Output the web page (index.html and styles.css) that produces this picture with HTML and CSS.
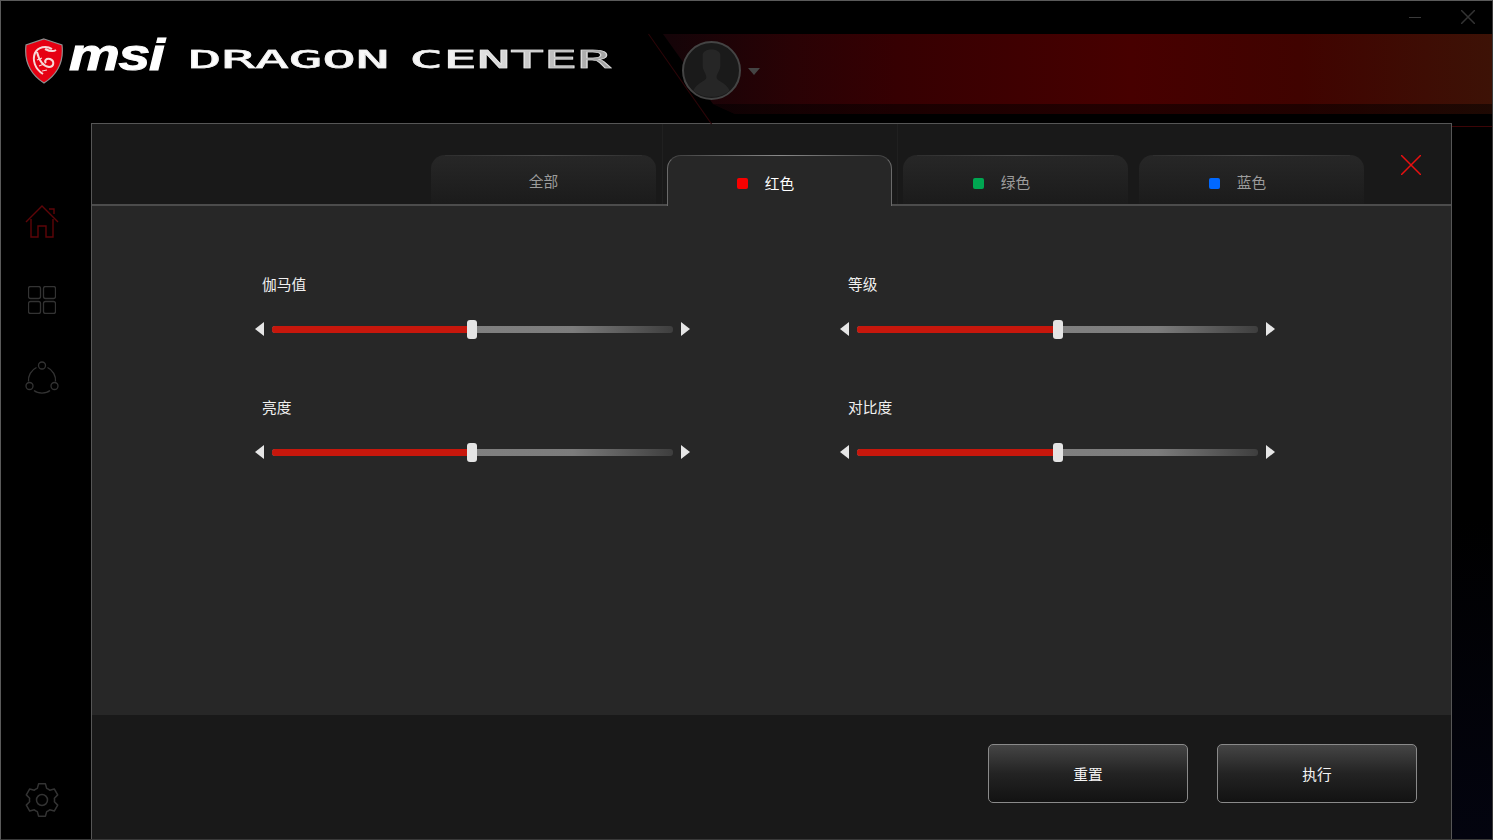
FILE: index.html
```html
<!DOCTYPE html>
<html lang="zh-CN">
<head>
    <meta charset="UTF-8">
    <meta name="viewport" content="width=device-width, initial-scale=1.0">
    <title>MSI Dragon Center</title>
    <link rel="stylesheet" href="styles.css">
</head>
<body>
    <div class="window">
        <header class="topbar">
            <svg class="shield" viewBox="0 0 40 46">
                <path d="M20 1 L38 7 C39.500 20 37 34 20 45 C3 34 .5 20 2 7 Z" fill="#e60012" stroke="#8f8f8f" stroke-width="1.200"/>
                <path d="M28 11 C22 7 14 9 11 15 C8 22 11 31 19 36 M13 14 C15 22 18 28 25 29 C30 29 31 23 26 21 C22 20 20 23 22 25 M21 11 C25 13 29 14 32 12" fill="none" stroke="#f7d8d8" stroke-width="2"/>
                <path d="M13 22 L18 20 M15 28 L20 26 M18 33 L23 32" fill="none" stroke="#f7d8d8" stroke-width="1.200"/>
            </svg>
            <div class="brand"><span class="brand-text">msi</span></div>
            <div class="product"><span class="product-text">DRAGON CENTER</span></div>
            <div class="banner">
                <div class="avatar">
                    <svg viewBox="0 0 59 59">
                        <path d="M20 13 C20 5 39 5 39 13 L39 24 C39 30 35 33 35 37 C35 41 45 42 49 51 C40 60 19 60 10 51 C14 42 24 41 24 37 C24 33 20 30 20 24 Z" fill="#262626"/>
                    </svg>
                </div>
                <span class="caret"></span>
            </div>
            <div class="win-controls">
                <span class="win-min"></span>
                <svg class="win-close" viewBox="0 0 14 14"><path d="M0 0 L14 14 M14 0 L0 14" stroke="#333" stroke-width="1.500"/></svg>
            </div>
        </header>

        <div class="main">
            <nav class="sidebar">
                <div class="nav-top">
                    <div class="nav-item">
                        <svg class="icon-home" viewBox="0 0 34 34">
                            <path d="M1 17 L17 1 L33 17 M24 4 H29 V9 M6 14 V32 H13 V21 H21 V32 H28 V14" fill="none" stroke="#5e0508" stroke-width="1.400"/>
                        </svg>
                    </div>
                    <div class="nav-item">
                        <svg class="icon-grid" viewBox="0 0 28 28">
                            <rect x=".5" y=".5" width="12" height="12" rx="2"/>
                            <rect x="15.500" y=".5" width="12" height="12" rx="2"/>
                            <rect x=".5" y="15.500" width="12" height="12" rx="2"/>
                            <rect x="15.500" y="15.500" width="12" height="12" rx="2"/>
                        </svg>
                    </div>
                    <div class="nav-item">
                        <svg class="icon-share" viewBox="0 0 34 34">
                            <circle cx="17" cy="4.500" r="3.500"/>
                            <circle cx="4.500" cy="25" r="3.500"/>
                            <circle cx="29.500" cy="25" r="3.500"/>
                            <path d="M11.500 6.500 C6 9 3 15 3.500 20.500 M22.500 6.500 C28 9 31 15 30.500 20.500 M9 29.500 C13 33 21 33 25 29.500"/>
                        </svg>
                    </div>
                </div>
                <div class="nav-item nav-gear">
                    <svg class="icon-gear" viewBox="0 0 34 34">
                        <circle cx="17" cy="17" r="5.500"/>
                        <path d="M13.570 .86 L20.430 .86 L21.680 5.410 Q23.300 6 24.700 7.150 L29.260 5.960 L32.690 11.900 L29.380 15.260 Q29.700 17 29.380 18.740 L32.690 22.100 L29.260 28.040 L24.700 26.850 Q23.300 28 21.680 28.590 L20.430 33.140 L13.570 33.140 L12.320 28.590 Q10.700 28 9.300 26.850 L4.740 28.040 L1.310 22.100 L4.620 18.740 Q4.300 17 4.620 15.260 L1.310 11.900 L4.740 5.960 L9.300 7.150 Q10.700 6 12.320 5.410 Z"/>
                    </svg>
                </div>
            </nav>

            <section class="panel">
                <div class="tabs">
                    <div class="tab plain">全部</div>
                    <div class="tab active"><span class="swatch red"></span>红色</div>
                    <div class="tab"><span class="swatch green"></span>绿色</div>
                    <div class="tab"><span class="swatch blue"></span>蓝色</div>
                    <svg class="panel-close" viewBox="0 0 20 20"><path d="M0 0 L20 20 M20 0 L0 20" stroke="#e81010" stroke-width="1.500"/></svg>
                </div>

                <div class="content">
                    <div class="setting">
                        <label>伽马值</label>
                        <div class="slider">
                            <span class="arrow left"></span>
                            <div class="track"><div class="fill"></div><span class="thumb"></span></div>
                            <span class="arrow right"></span>
                        </div>
                    </div>
                    <div class="setting">
                        <label>等级</label>
                        <div class="slider">
                            <span class="arrow left"></span>
                            <div class="track"><div class="fill"></div><span class="thumb"></span></div>
                            <span class="arrow right"></span>
                        </div>
                    </div>
                    <div class="setting">
                        <label>亮度</label>
                        <div class="slider">
                            <span class="arrow left"></span>
                            <div class="track"><div class="fill"></div><span class="thumb"></span></div>
                            <span class="arrow right"></span>
                        </div>
                    </div>
                    <div class="setting">
                        <label>对比度</label>
                        <div class="slider">
                            <span class="arrow left"></span>
                            <div class="track"><div class="fill"></div><span class="thumb"></span></div>
                            <span class="arrow right"></span>
                        </div>
                    </div>
                </div>

                <div class="actions">
                    <button class="btn">重置</button>
                    <button class="btn">执行</button>
                </div>
            </section>

            <div class="strip"></div>
        </div>
    </div>
</body>
</html>
```

FILE: styles.css
```css
* {
    box-sizing: border-box;
}
body {
    margin: 0;
    background: #000;
    font-family: "Noto Sans CJK SC", "Noto Sans", sans-serif;
    overflow: hidden;
}
.window {
    width: 1493px;
    height: 840px;
    display: flex;
    flex-direction: column;
    background: #000;
    border-top: 1px solid #5a5a5a;
    border-left: 1px solid #5a5a5a;
    border-right: 1px solid #3a3a3a;
    border-bottom: 1px solid #3a3a3a;
    overflow: hidden;
}

/* Top bar */
.topbar {
    height: 122px;
    flex: none;
    display: flex;
    align-items: flex-start;
    position: relative;
}
.shield {
    width: 40px;
    height: 46px;
    margin: 37px 0 0 23px;
    flex: none;
}
.brand {
    width: 100px;
    margin: 26px 0 0 5px;
    flex: none;
}
.brand-text {
    display: inline-block;
    font: italic 700 45px/56px "Liberation Sans", sans-serif;
    letter-spacing: -1px;
    color: #fff;
    -webkit-text-stroke: 1px #fff;
    transform: scaleX(1.27);
    transform-origin: left center;
}
.product {
    width: 424px;
    margin: 45px 0 0 19px;
    flex: none;
}
.product-text {
    display: inline-block;
    font: 400 25px/28px "DejaVu Sans Mono", monospace;
    word-spacing: -6px;
    white-space: nowrap;
    transform: scaleX(2.23);
    transform-origin: left center;
    background: linear-gradient(90deg, #fff 0%, #f4f4f4 60%, #a0a0a0 100%);
    -webkit-background-clip: text;
    background-clip: text;
    color: transparent;
    -webkit-text-stroke: .6px rgba(235, 235, 235, .75);
}
.banner {
    flex: 1;
    height: 80px;
    margin: 33px 0 0 41px;
    padding: 7px 0 0 29px;
    display: flex;
    align-items: flex-start;
    position: relative;
}
.banner::before {
    content: "";
    position: absolute;
    inset: 0;
    background:
        linear-gradient(180deg, transparent 0, transparent 70px, rgba(0, 0, 0, .5) 70px),
        linear-gradient(90deg, #150408 2%, #2a0205 17%, #360002 29%, #470000 57%, #400300 77%, #3d1206 100%);
    clip-path: polygon(10px 0, 100% 0, 100% 100%, 82px 100%, 60px 70px);
}
.banner::after {
    content: "";
    position: absolute;
    top: 0;
    left: -5px;
    width: 1px;
    height: 110px;
    background: #2c0508;
    transform: rotate(-35deg);
    transform-origin: top;
}
.avatar {
    width: 59px;
    height: 59px;
    flex: none;
    border: 2px solid #444;
    border-radius: 50%;
    background: #1a1a1a;
    overflow: hidden;
    position: relative;
    z-index: 1;
}
.avatar svg {
    display: block;
    width: 55px;
    height: 55px;
}
.caret {
    width: 0;
    height: 0;
    margin: 27px 0 0 7px;
    border-left: 6px solid transparent;
    border-right: 6px solid transparent;
    border-top: 7px solid #444;
    position: relative;
    z-index: 1;
}
.win-controls {
    position: absolute;
    top: 9px;
    right: 17px;
    display: flex;
    align-items: center;
    gap: 40px;
}
.win-min {
    width: 12px;
    height: 1px;
    background: #3a3a3a;
}
.win-close {
    width: 14px;
    height: 14px;
}

/* Layout below the top bar */
.main {
    flex: 1;
    min-height: 0;
    display: flex;
}
.sidebar {
    width: 90px;
    flex: none;
    display: flex;
    flex-direction: column;
    justify-content: space-between;
    padding: 60px 9px 0 0;
}
.nav-item {
    height: 78px;
    display: flex;
    justify-content: center;
    align-items: center;
}
.icon-home,
.icon-share,
.icon-gear {
    width: 34px;
    height: 34px;
}
.icon-grid {
    width: 28px;
    height: 28px;
}
.icon-grid rect,
.icon-share circle,
.icon-share path,
.icon-gear circle,
.icon-gear path {
    fill: none;
    stroke: #333;
    stroke-width: 1.300;
}
.icon-gear circle,
.icon-gear path {
    stroke-width: 1.500;
    stroke-linejoin: round;
}

/* Panel */
.panel {
    width: 1361px;
    flex: none;
    display: flex;
    flex-direction: column;
    background: #191919;
    border: 1px solid #565656;
    border-bottom: 0;
}
.tabs {
    height: 82px;
    flex: none;
    display: flex;
    align-items: flex-end;
    gap: 11px;
    padding-left: 339px;
    border-bottom: 2px solid #4c4c4c;
    position: relative;
    background:
        linear-gradient(#202020, #202020) 570px 0 / 1px 100% no-repeat,
        linear-gradient(#202020, #202020) 805px 0 / 1px 100% no-repeat;
}
.tab {
    width: 225px;
    height: 49px;
    display: flex;
    justify-content: center;
    align-items: center;
    gap: 17px;
    padding: 5px 28px 0 0;
    border-radius: 14px 14px 0 0;
    background: linear-gradient(180deg, #272727 0%, #1b1b1b 100%);
    color: #9c9c9c;
    font-size: 14.700px;
    line-height: 20px;
    position: relative;
}
.tab::before {
    content: "";
    position: absolute;
    top: 0;
    left: 14px;
    right: 14px;
    height: 1px;
    background: linear-gradient(90deg, #2e2e2e, #4a4a4a, #2e2e2e);
}
.tab.plain {
    padding: 3px 0 0;
}
.tab.active {
    height: 51px;
    margin-bottom: -2px;
    padding: 3px 28px 0 0;
    background: #272727;
    border: 1px solid #6a6a6a;
    border-top-color: #444;
    border-bottom: 0;
    color: #fff;
}
.tab.active::before {
    top: -1px;
    background: linear-gradient(90deg, #444, #8a8a8a, #444);
}
.swatch {
    width: 11px;
    height: 11px;
    margin-top: 2px;
    border-radius: 2px;
}
.swatch.red { background: #f80000; }
.swatch.green { background: #00a651; }
.swatch.blue { background: #0068ff; }
.panel-close {
    position: absolute;
    top: 31px;
    right: 30px;
    width: 20px;
    height: 20px;
}

.content {
    flex: 1;
    min-height: 0;
    display: grid;
    grid-template-columns: 585px 436px;
    grid-auto-rows: 123px;
    align-content: start;
    padding: 66px 0 0 163px;
    background: #272727;
}
.setting label {
    display: block;
    height: 24px;
    padding-left: 7px;
    color: #f0f0f0;
    font-size: 14.700px;
    line-height: 24px;
}
.setting:nth-child(even) label {
    padding-left: 8px;
}
.slider {
    display: flex;
    align-items: center;
    gap: 8px;
    height: 20px;
    margin-top: 23px;
}
.arrow {
    width: 0;
    height: 0;
    flex: none;
    border-top: 7px solid transparent;
    border-bottom: 7px solid transparent;
}
.arrow.left {
    border-right: 9px solid #e6e6e6;
}
.arrow.right {
    border-left: 9px solid #e6e6e6;
}
.track {
    width: 401px;
    height: 7px;
    flex: none;
    display: flex;
    position: relative;
    border-radius: 3px;
    background: linear-gradient(90deg, #808080 50%, #7c7c7c 75%, #3e3e3e 100%);
}
.fill {
    width: 50%;
    border-radius: 3px 0 0 3px;
    background: #c7170c;
}
.thumb {
    position: absolute;
    top: -6px;
    left: 195px;
    width: 10px;
    height: 19px;
    border-radius: 3px;
    background: #e4e4e4;
}
.setting:nth-child(even) .thumb {
    left: 196px;
}

.actions {
    height: 124px;
    flex: none;
    display: flex;
    justify-content: flex-end;
    gap: 29px;
    padding: 29px 34px 0 0;
}
.btn {
    width: 200px;
    height: 59px;
    border: 1px solid #8a8a8a;
    border-radius: 5px;
    background: linear-gradient(180deg, #454545 0%, #232323 50%, #121212 100%);
    color: #f4f4f4;
    font-family: inherit;
    font-size: 14.700px;
}

.strip {
    flex: 1;
    margin-top: 3px;
    border-top: 1px solid #3d0507;
    background: linear-gradient(180deg, #000 55%, #03040f 100%);
}
```
